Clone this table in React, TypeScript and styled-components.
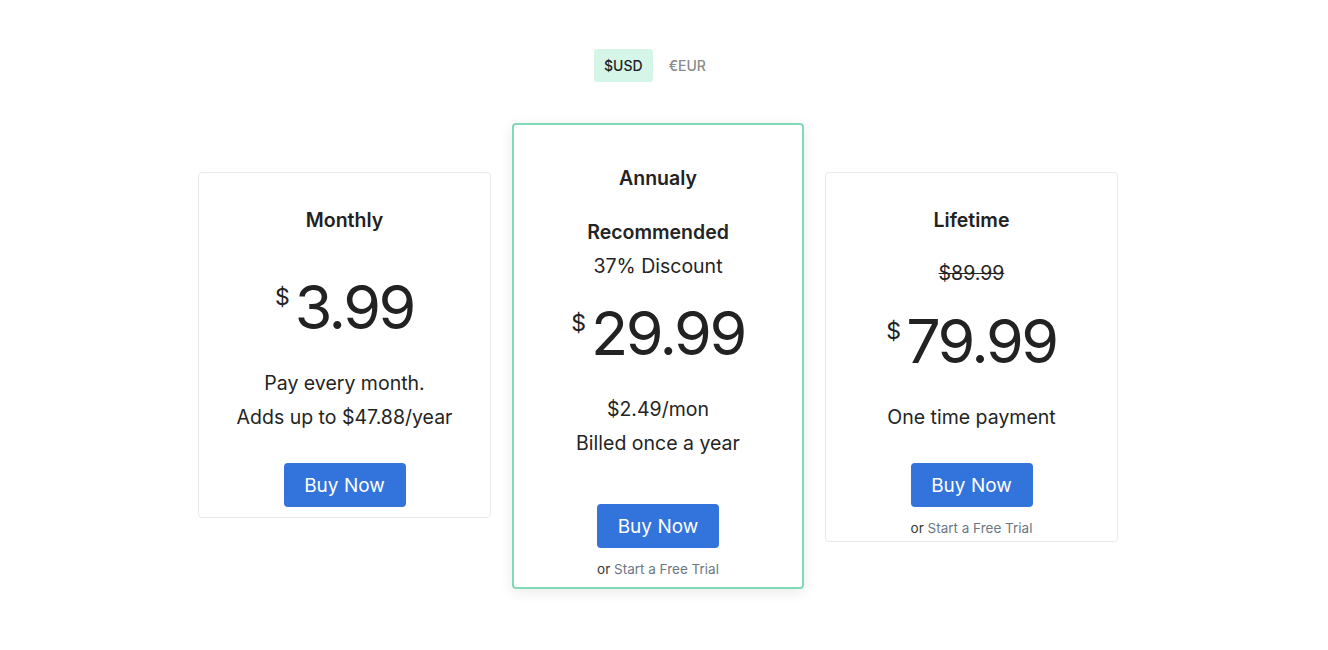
import React from "react";
import styled, { createGlobalStyle, css } from "styled-components";

const Global = createGlobalStyle`
  html, body { margin: 0; padding: 0; background: #ffffff; }
  body { font-family: Inter, "Noto Sans", Arial, sans-serif; color: #242424; }
  * { box-sizing: border-box; }
`;

const Page = styled.main`
  display: flex;
  flex-direction: column;
  align-items: center;
  padding: 49px 12px 40px 0;
`;

const Toggle = styled.div`
  display: flex;
  align-items: center;
`;

const CurrencyButton = styled.button<{ $active?: boolean }>`
  height: 33px;
  padding: 0 ${(p) => (p.$active ? 10 : 16)}px;
  border: none;
  border-radius: 3px;
  font-family: inherit;
  font-size: 14px;
  font-weight: 500;
  cursor: pointer;
  background: ${(p) => (p.$active ? "#d6f5e9" : "transparent")};
  color: ${(p) => (p.$active ? "#1f1f1f" : "#8a8a8a")};
`;

const Cards = styled.div`
  display: flex;
  align-items: flex-start;
  gap: 21px;
  margin-top: 41px;
`;

const Card = styled.section<{ $featured?: boolean; $padTop: number; $padBottom: number }>`
  width: 293px;
  display: flex;
  flex-direction: column;
  align-items: center;
  text-align: center;
  background: #fff;
  border-radius: 4px;
  padding-top: ${(p) => p.$padTop}px;
  padding-bottom: ${(p) => p.$padBottom}px;
  ${(p) =>
    p.$featured
      ? css`
          width: 292px;
          border: 2px solid #7fdbb7;
          box-shadow: 0 3px 14px rgba(0, 0, 0, 0.09);
        `
      : css`
          margin-top: 49px;
          border: 1px solid #ebebeb;
        `}
`;

const Title = styled.h3`
  margin: 0;
  font-size: 19.5px;
  line-height: 28px;
  font-weight: 600;
  color: #222;
`;

const Line = styled.p<{ $mt?: number; $strong?: boolean; $strike?: boolean }>`
  margin: ${(p) => p.$mt ?? 0}px 0 0;
  font-size: 19.5px;
  line-height: 34px;
  font-weight: ${(p) => (p.$strong ? 600 : 400)};
  color: #242424;
  text-decoration: ${(p) => (p.$strike ? "line-through" : "none")};
`;

const Price = styled.div<{ $mt: number }>`
  margin-top: ${(p) => p.$mt}px;
  display: flex;
  align-items: flex-start;
  justify-content: center;
  height: 80px;
  color: #222;
`;

const Currency = styled.span`
  font-size: 23px;
  line-height: 22px;
  margin-top: 19px;
  margin-right: 5px;
  font-weight: 400;
`;

const Amount = styled.span`
  font-size: 61px;
  line-height: 80px;
  font-weight: 400;
  letter-spacing: -2.5px;
`;

const Details = styled.div<{ $mt: number }>`
  margin-top: ${(p) => p.$mt}px;
  display: flex;
  flex-direction: column;
`;

const BuyButton = styled.button<{ $mt: number }>`
  margin-top: ${(p) => p.$mt}px;
  width: 122px;
  height: 44px;
  border: none;
  border-radius: 4px;
  background: #3273dc;
  color: #fff;
  font-family: inherit;
  font-size: 19px;
  font-weight: 400;
  cursor: pointer;
`;

const Trial = styled.p`
  margin: 9px 0 0;
  font-size: 13.5px;
  line-height: 24px;
  color: #363636;
`;

const TrialLink = styled.a`
  color: #6b7785;
  text-decoration: none;
`;

export default function App() {
  return (
    <>
      <Global />
      <Page>
        <Toggle>
          <CurrencyButton $active>$USD</CurrencyButton>
          <CurrencyButton>€EUR</CurrencyButton>
        </Toggle>
        <Cards>
          <Card $padTop={33} $padBottom={10}>
            <Title>Monthly</Title>
            <Price $mt={33}>
              <Currency>$</Currency>
              <Amount>3.99</Amount>
            </Price>
            <Details $mt={19}>
              <Line>Pay every month.</Line>
              <Line>Adds up to $47.88/year</Line>
            </Details>
            <BuyButton $mt={29}>Buy Now</BuyButton>
          </Card>

          <Card $featured $padTop={39} $padBottom={6}>
            <Title>Annualy</Title>
            <Details $mt={23}>
              <Line $strong>Recommended</Line>
              <Line>37% Discount</Line>
            </Details>
            <Price $mt={10}>
              <Currency>$</Currency>
              <Amount>29.99</Amount>
            </Price>
            <Details $mt={19}>
              <Line>$2.49/mon</Line>
              <Line>Billed once a year</Line>
            </Details>
            <BuyButton $mt={44}>Buy Now</BuyButton>
            <Trial>
              or <TrialLink href="#">Start a Free Trial</TrialLink>
            </Trial>
          </Card>

          <Card $padTop={33} $padBottom={1}>
            <Title>Lifetime</Title>
            <Line $mt={22} $strike>$89.99</Line>
            <Price $mt={11}>
              <Currency>$</Currency>
              <Amount>79.99</Amount>
            </Price>
            <Details $mt={19}>
              <Line>One time payment</Line>
            </Details>
            <BuyButton $mt={29}>Buy Now</BuyButton>
            <Trial>
              or <TrialLink href="#">Start a Free Trial</TrialLink>
            </Trial>
          </Card>
        </Cards>
      </Page>
    </>
  );
}
